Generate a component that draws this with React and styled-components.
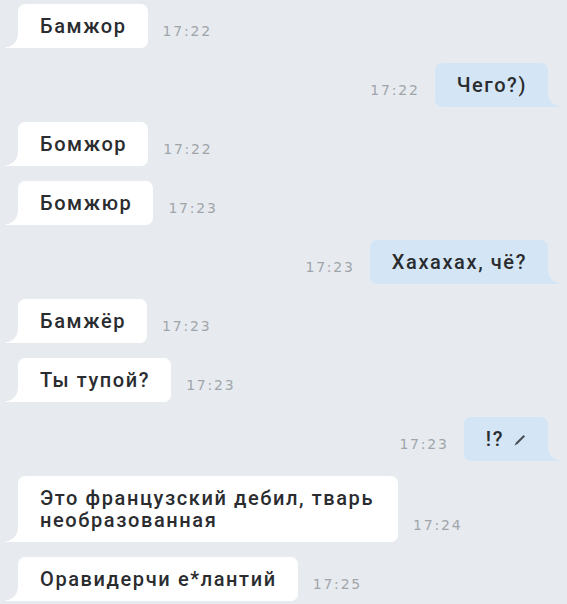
import React from 'react';
import styled, { createGlobalStyle } from 'styled-components';

const messages = [
  { out: false, text: 'Бамжор', time: '17:22' },
  { out: true, text: 'Чего?)', time: '17:22' },
  { out: false, text: 'Бомжор', time: '17:22' },
  { out: false, text: 'Бомжюр', time: '17:23' },
  { out: true, text: 'Хахахах, чё?', time: '17:23' },
  { out: false, text: 'Бамжёр', time: '17:23' },
  { out: false, text: 'Ты тупой?', time: '17:23' },
  { out: true, text: '!?', time: '17:23', edited: true },
  { out: false, text: 'Это французский дебил, тварь необразованная', time: '17:24' },
  { out: false, text: 'Оравидерчи е*лантий', time: '17:25' },
];

function App() {
  return (
    <>
      <Global />
      <Chat>
        {messages.map((m, i) => (
          <Row key={i} $out={m.out}>
            {m.out && <Time>{m.time}</Time>}
            <Bubble $out={m.out}>
              {m.text}
              {m.edited && (
                <Pen viewBox="0 0 14 14">
                  <path d="M1.5 12.5 L3 9.5 L10.5 2 L12 3.5 L4.5 11 Z" fill="#4a4f55" />
                </Pen>
              )}
            </Bubble>
            {!m.out && <Time>{m.time}</Time>}
          </Row>
        ))}
      </Chat>
    </>
  );
}

export default App;

const Global = createGlobalStyle`
  body {
    margin: 0;
    background: #e7ebef;
    font-family: Roboto, "Noto Sans", sans-serif;
  }
`;

const Chat = styled.div`
  display: flex;
  flex-direction: column;
  gap: 15px;
  padding: 4px 19px 0 18px;
  height: 600px;
  overflow: hidden;
`;

const Row = styled.div`
  display: flex;
  align-items: flex-end;
  gap: 15px;
  justify-content: ${p => (p.$out ? 'flex-end' : 'flex-start')};
`;

const Bubble = styled.div`
  position: relative;
  max-width: 337px;
  padding: 11px 21px 11px 22px;
  font-size: 20px;
  line-height: 22px;
  font-weight: 500;
  letter-spacing: 1.6px;
  color: #2a2c2f;
  background: ${p => (p.$out ? '#d4e6f5' : '#ffffff')};
  border-radius: ${p => (p.$out ? '7px 7px 0 7px' : '7px 7px 7px 0')};

  &::before {
    content: '';
    position: absolute;
    bottom: 0;
    width: 15px;
    height: 13px;
    ${p =>
      p.$out
        ? `right: -15px;
           background: radial-gradient(ellipse 15px 13px at 100% 0, transparent 96%, #d4e6f5 100%);`
        : `left: -15px;
           background: radial-gradient(ellipse 15px 13px at 0 0, transparent 96%, #ffffff 100%);`}
  }
`;

const Time = styled.span`
  font-family: "DejaVu Sans", sans-serif;
  font-size: 14px;
  line-height: 16px;
  letter-spacing: 1.8px;
  color: #a0a5aa;
  padding-bottom: 9px;
`;

const Pen = styled.svg`
  width: 14px;
  height: 14px;
  margin-left: 9px;
  vertical-align: -1px;
`;
